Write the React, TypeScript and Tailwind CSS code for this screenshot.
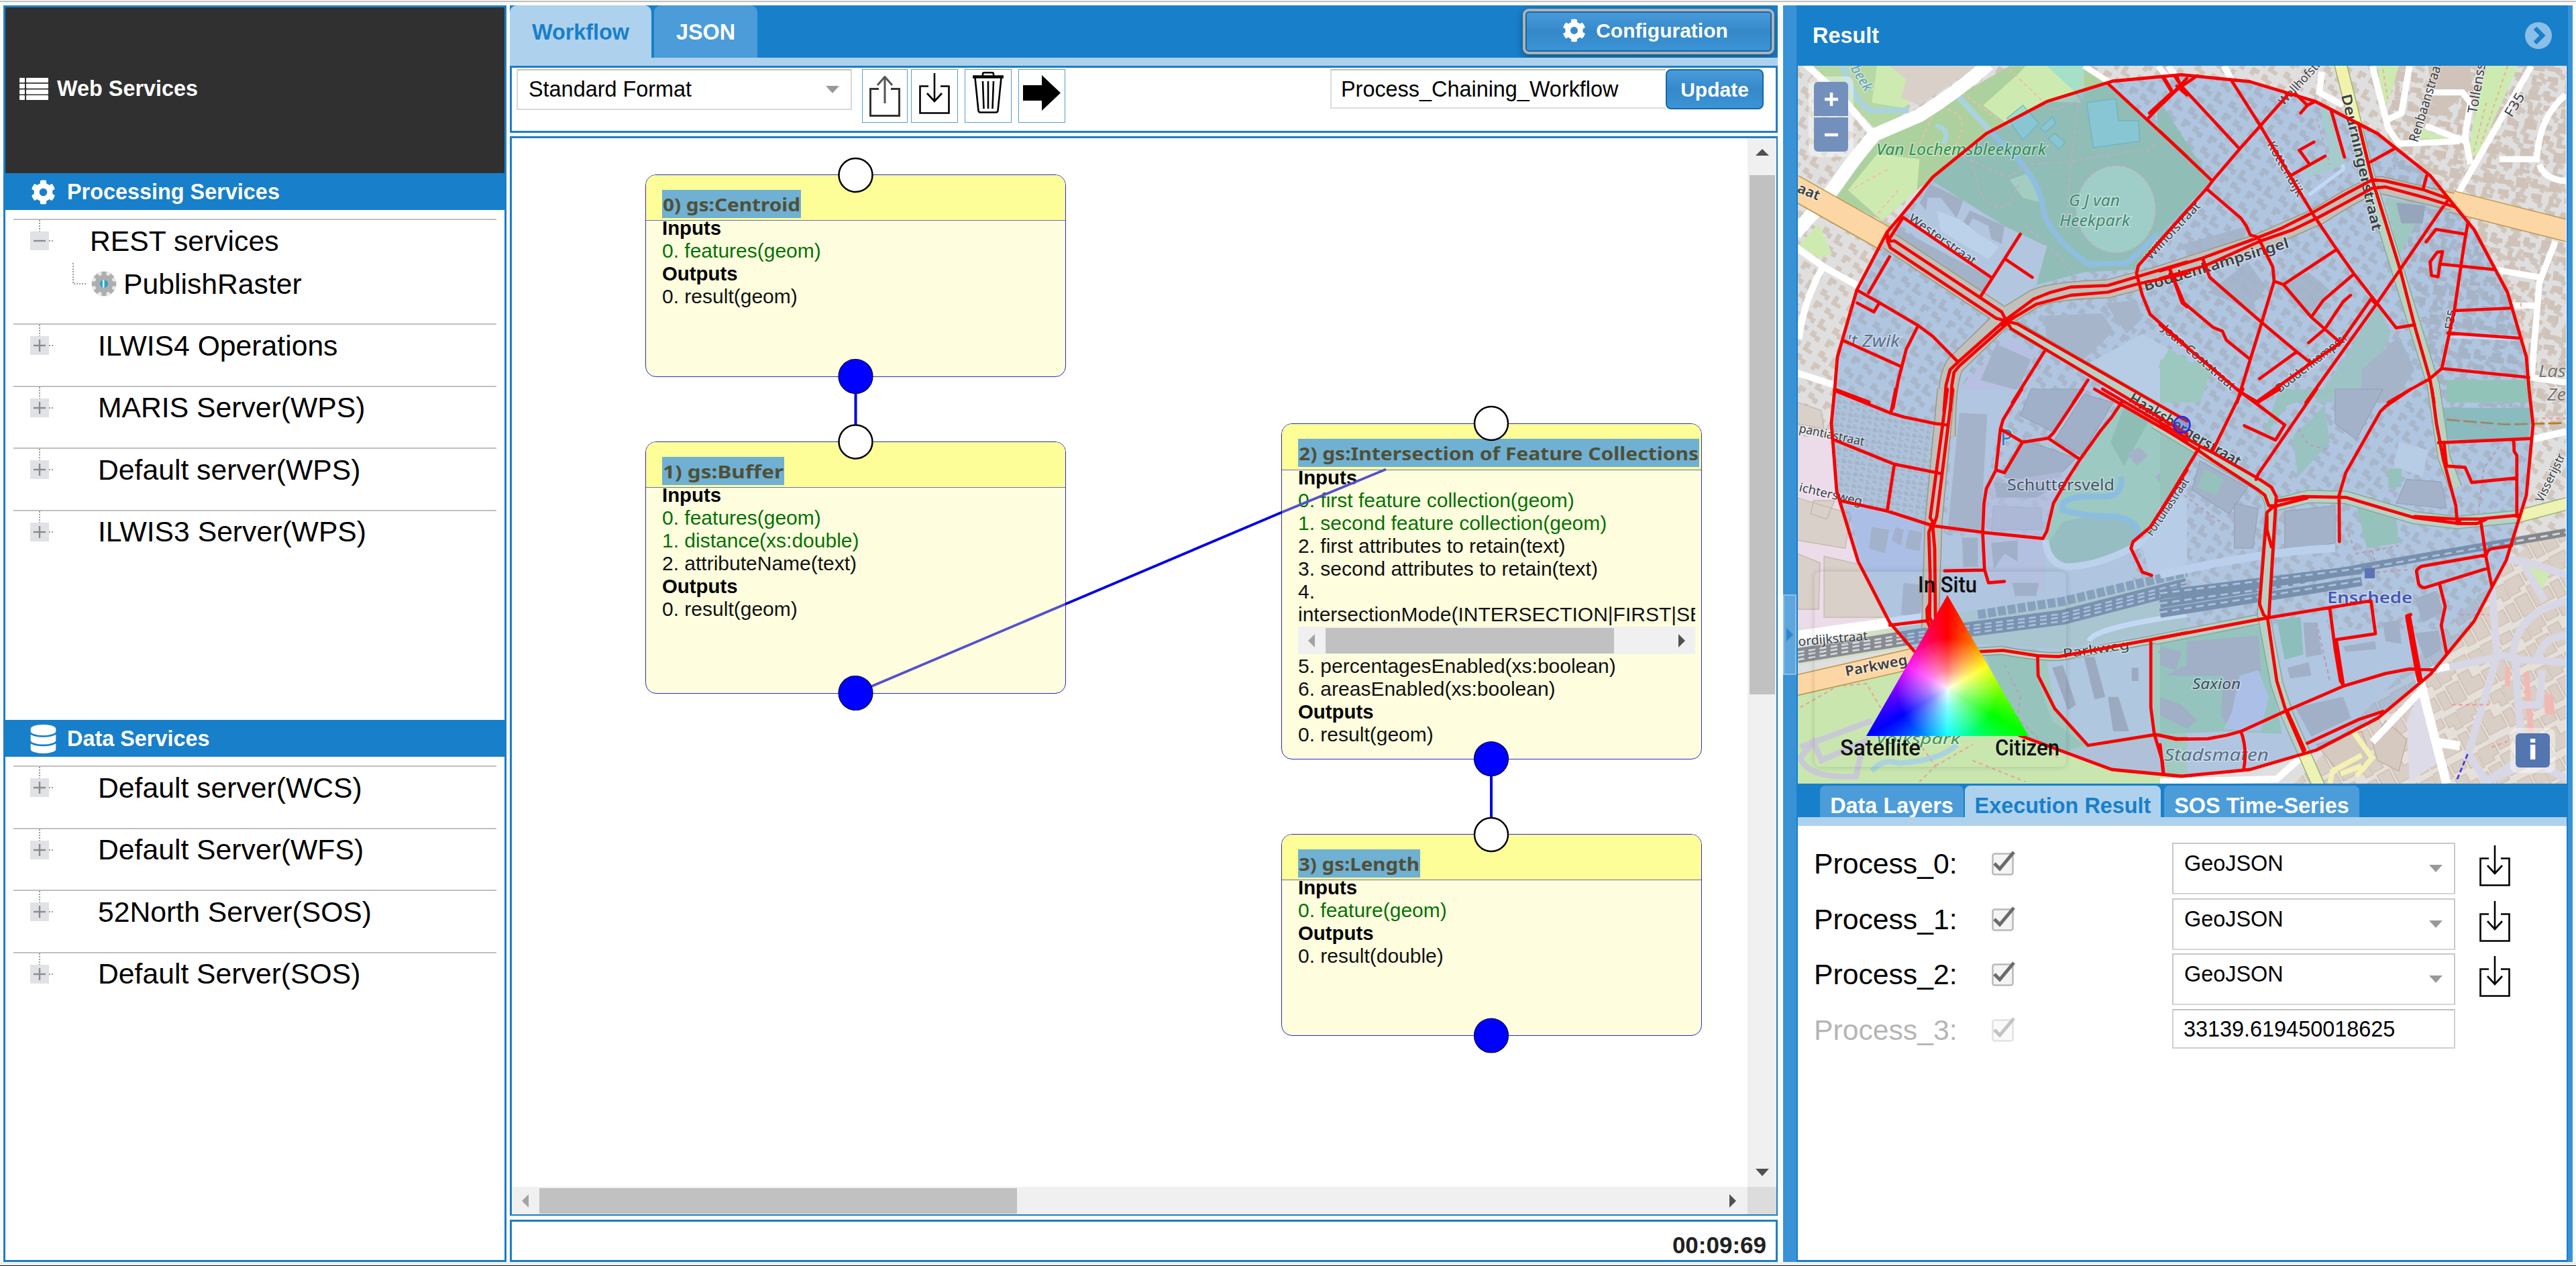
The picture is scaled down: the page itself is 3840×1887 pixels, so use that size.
import React from "react";
import { FaCog, FaDatabase } from "react-icons/fa";

/* ---------- small icons ---------- */

function ListIcon() {
  return (
    <svg width="43" height="33" viewBox="0 0 43 33" fill="#fff">
      {[0, 8.7, 17.4, 26].map((y) => (
        <g key={y}>
          <rect x="0" y={y} width="8" height="7" rx="1" />
          <rect x="10" y={y} width="33" height="7" rx="1" />
        </g>
      ))}
    </svg>
  );
}

function Expander({ open = false }: { open?: boolean }) {
  return (
    <svg className="ml-[25px] shrink-0" width="35" height="62" viewBox="0 0 35 62">
      <path d="M14 0V17" stroke="#999" strokeWidth="2" strokeDasharray="2 2" />
      <path d="M28 31H35" stroke="#999" strokeWidth="2" strokeDasharray="2 2" />
      <rect x="0" y="17" width="28" height="28" fill="#e0e2e5" />
      <path d="M5 31H23" stroke="#8c8c8c" strokeWidth="2.4" />
      {!open && <path d="M14 22V40" stroke="#8c8c8c" strokeWidth="2.4" />}
    </svg>
  );
}

function GearBadge() {
  return (
    <svg className="ml-[6px] shrink-0" width="38" height="40" viewBox="-19 -20 38 40">
      <circle r="19" fill="#e9e9e9" />
      <circle r="13.5" fill="#aeaeae" />
      {[0, 45, 90, 135, 180, 225, 270, 315].map((a) => (
        <rect key={a} x="-3.5" y="-18" width="7" height="8" fill="#aeaeae" transform={`rotate(${a})`} />
      ))}
      <circle r="6" fill="#25a3cc" />
      <rect x="-2" y="-5.5" width="2.5" height="11" fill="#fff" />
    </svg>
  );
}

function DownloadIcon() {
  return (
    <svg width="46" height="61" viewBox="0 0 46 61" fill="none" stroke="#000" strokeWidth="2.6">
      <path d="M14 19.5H1.5V59.5H44.5V19.5H32" />
      <path d="M23 0V41M12 30L23 42L34 30" />
    </svg>
  );
}

function UploadIcon() {
  return (
    <svg width="46" height="61" viewBox="0 0 46 61" fill="none">
      <path d="M14 19.5H1.5V59.5H44.5V19.5H32" stroke="#333" strokeWidth="3" />
      <path d="M23 41V2M12 14L23 1.5L34 14" stroke="#555" strokeWidth="3" />
    </svg>
  );
}

function TrashIcon() {
  return (
    <svg width="46" height="62" viewBox="0 0 46 62" fill="none" stroke="#000" strokeWidth="2.6" strokeLinejoin="round">
      <path d="M1 8.5V6.5H45V8.5ZM15 6V3Q15 1.3 17 1.3H29Q31 1.3 31 3V6" />
      <path d="M3.5 9L8.5 58Q9 60.5 11.5 60.5H34.5Q37 60.5 37.5 58L42.500 9" />
      <path d="M15 14L16.500 55M23 14V55M31 14L29.500 55" />
    </svg>
  );
}

function Caret({ dir, color }: { dir: "l" | "r" | "u" | "d"; color: string }) {
  const d = { l: "M10 0V20L0 10Z", r: "M0 0V20L10 10Z", u: "M0 10H20L10 0Z", d: "M0 0H20L10 11Z" }[dir];
  const tall = dir === "l" || dir === "r";
  return (
    <svg width={tall ? 10 : 20} height={tall ? 20 : 11} viewBox={tall ? "0 0 10 20" : "0 0 20 11"} className="shrink-0">
      <path d={d} fill={color} />
    </svg>
  );
}

/* ---------- left column ---------- */

function SectionBar({ icon, label }: { icon: React.ReactNode; label: string }) {
  return (
    <div className="flex h-[55px] shrink-0 items-center bg-[#187fca] pl-[38px] pt-[2px] text-[32.4px] font-bold text-white">
      <span className="flex w-[54px]">{icon}</span>
      {label}
    </div>
  );
}

function TreeRow({ label }: { label: string }) {
  return (
    <div className="h-[92.5px] border-t-2 border-[#c0c0c0]">
      <div className="flex h-[62px] items-center">
        <Expander />
        <span className="ml-[66px] text-[42.7px]">{label}</span>
      </div>
    </div>
  );
}

function LeftPanel() {
  return (
    <aside className="flex w-[750px] shrink-0 flex-col border-[3px] border-[#1d7ec6] bg-white">
      <div className="flex h-[247px] shrink-0 items-center gap-[13px] bg-[#303030] pb-[4px] pl-[21px] text-[32.4px] font-bold text-white">
        <ListIcon />
        Web Services
      </div>
      <SectionBar icon={<FaCog size={37} />} label="Processing Services" />
      <div className="h-[760px] shrink-0 px-3 pt-[13px]">
        <div className="h-[156px] border-t-2 border-[#c0c0c0]">
          <div className="flex h-[62px] items-center">
            <Expander open />
            <span className="ml-[54px] text-[42.7px]">REST services</span>
          </div>
          <div className="flex h-[66px] items-center">
            <svg className="ml-[88px] shrink-0" width="22" height="64" viewBox="0 0 22 64">
              <path d="M1 1V32H22" fill="none" stroke="#999" strokeWidth="2" strokeDasharray="2 2" />
            </svg>
            <GearBadge />
            <span className="ml-[10px] text-[42.7px]">PublishRaster</span>
          </div>
        </div>
        {["ILWIS4 Operations", "MARIS Server(WPS)", "Default server(WPS)", "ILWIS3 Server(WPS)"].map((t) => (
          <TreeRow key={t} label={t} />
        ))}
      </div>
      <SectionBar icon={<FaDatabase size={43} className="-ml-[3px]" />} label="Data Services" />
      <div className="px-3 pt-[13px]">
        {["Default server(WCS)", "Default Server(WFS)", "52North Server(SOS)", "Default Server(SOS)"].map((t) => (
          <TreeRow key={t} label={t} />
        ))}
      </div>
    </aside>
  );
}

/* ---------- workflow canvas ---------- */

const OX = 763;
const OY = 206;

type Line = { t: string; k?: "h" | "g" | "scroll" };
type NodeData = { x: number; y: number; h: number; head: number; title: string; tw: number; lines: Line[] };

const nodes: NodeData[] = [
  {
    x: 962, y: 260, h: 302, head: 68, title: "0) gs:Centroid", tw: 207,
    lines: [{ t: "Inputs", k: "h" }, { t: "0. features(geom)", k: "g" }, { t: "Outputs", k: "h" }, { t: "0. result(geom)" }],
  },
  {
    x: 962, y: 658, h: 376, head: 68, title: "1) gs:Buffer", tw: 182,
    lines: [
      { t: "Inputs", k: "h" }, { t: "0. features(geom)", k: "g" }, { t: "1. distance(xs:double)", k: "g" },
      { t: "2. attributeName(text)" }, { t: "Outputs", k: "h" }, { t: "0. result(geom)" },
    ],
  },
  {
    x: 1910, y: 631, h: 501, head: 69, title: "2) gs:Intersection of Feature Collections", tw: 598,
    lines: [
      { t: "Inputs", k: "h" }, { t: "0. first feature collection(geom)", k: "g" }, { t: "1. second feature collection(geom)", k: "g" },
      { t: "2. first attributes to retain(text)" }, { t: "3. second attributes to retain(text)" }, { t: "4." },
      { t: "intersectionMode(INTERSECTION|FIRST|SECOND)" }, { t: "", k: "scroll" },
      { t: "5. percentagesEnabled(xs:boolean)" }, { t: "6. areasEnabled(xs:boolean)" },
      { t: "Outputs", k: "h" }, { t: "0. result(geom)" },
    ],
  },
  {
    x: 1910, y: 1243, h: 301, head: 68, title: "3) gs:Length", tw: 182,
    lines: [{ t: "Inputs", k: "h" }, { t: "0. feature(geom)", k: "g" }, { t: "Outputs", k: "h" }, { t: "0. result(double)" }],
  },
];

function NodeCard({ n }: { n: NodeData }) {
  return (
    <div
      className="absolute w-[627px] overflow-hidden rounded-[16px] border-[1.5px] border-[#2a2ad0] bg-[#fefedf]"
      style={{ left: n.x - OX, top: n.y - OY, height: n.h }}
    >
      <div className="border-b-[1.5px] border-[#6b6bb8] bg-[#fefe98] pl-[24px] pt-[22px]" style={{ height: n.head }}>
        <div className="h-[42px] bg-[#70b0d2]" style={{ width: n.tw }}>
          <svg width={n.tw} height="42" className="block overflow-visible">
            <text
              x="1" y="32" fontSize="27" fontWeight="700" fill="#4f5038" textLength={n.tw - 2} lengthAdjust="spacingAndGlyphs"
              fontFamily='"Noto Sans", sans-serif'
            >
              {n.title}
            </text>
          </svg>
        </div>
      </div>
      <div className="-mt-[6px] ml-[24px] w-[592px] overflow-hidden text-[30px] leading-[34px]">
        {n.lines.map((l, i) =>
          l.k === "scroll" ? (
            <div key={i} className="my-px flex h-[41px] items-center bg-[#f0f0f0] px-[15px]">
              <Caret dir="l" color="#a3a3a3" />
              <div className="ml-[16px] h-[38px] w-[430px] bg-[#c1c1c1]" />
              <div className="grow" />
              <Caret dir="r" color="#505050" />
            </div>
          ) : (
            <div
              key={i}
              className={
                "h-[34px] whitespace-nowrap " +
                (l.k === "h" ? "text-[29.4px] font-bold text-black" : l.k === "g" ? "text-[#067106]" : "text-[#111]")
              }
            >
              {l.t}
            </div>
          )
        )}
      </div>
    </div>
  );
}

function Canvas() {
  return (
    <div className="relative h-[1563px] w-[1842px] overflow-hidden bg-white">
      {nodes.map((n) => (
        <NodeCard key={n.title} n={n} />
      ))}
      <svg className="absolute inset-0" width="1842" height="1563" viewBox="763 206 1842 1563">
        <path d="M1275.500 561V640M2223 1131V1220" stroke="#0000e6" strokeWidth="4" />
        <path d="M1275.500 1033L1588 900.500M1911 763.500L2066 699.500" stroke="#5450cf" strokeWidth="3.800" />
        <path d="M1588 900.500L1911 763.500" stroke="#0000e6" strokeWidth="3.800" />
        {[[1275.5, 261], [1275.5, 658.5], [2223, 631], [2223, 1244]].map(([x, y]) => (
          <circle key={x + "" + y} cx={x} cy={y} r="25" fill="#fff" stroke="#000" strokeWidth="2.500" />
        ))}
        {[[1275.5, 561], [1275.5, 1033], [2223, 1131], [2223, 1543.5]].map(([x, y]) => (
          <circle key={x + "" + y} cx={x} cy={y} r="25.500" fill="#00f" stroke="#000040" strokeWidth="1.200" />
        ))}
      </svg>
    </div>
  );
}

function ToolButton({ children, cls = "" }: { children: React.ReactNode; cls?: string }) {
  return <div className={"flex h-[80px] justify-center border border-[#5b9bd0] bg-white " + cls}>{children}</div>;
}

function CenterPanel() {
  return (
    <main className="ml-[5px] flex w-[1890px] shrink-0 flex-col">
      <div className="flex h-[78px] shrink-0 bg-[#187fca] text-[32.4px] font-bold">
        <div className="h-[90px] w-[211px] rounded-t-[10px] bg-[#aed2ed] pt-[21px] text-center leading-[38px] text-[#187fca]">Workflow</div>
        <div className="ml-[4px] h-[78px] w-[154px] rounded-t-[10px] bg-[#4b9cd9] pt-[21px] text-center leading-[38px] text-white">JSON</div>
        <div className="grow" />
        <div className="mr-[5px] mt-[5px] flex h-[68px] w-[375px] items-center justify-center gap-[15px] rounded-[9px] border-[4px] border-[#b0b0b0] bg-linear-to-b from-[#4a9bdb] via-[#3589c9] to-[#3b94d6] pb-[3px] pr-[10px] text-[30px] text-white shadow-[0_4px_12px_rgba(0,0,0,.35),inset_0_0_0_2px_#1468ab]">
          <FaCog size={35} />
          Configuration
        </div>
      </div>
      <div className="h-[12px] shrink-0 bg-[#aed2ed]" />
      <div className="flex h-[100px] shrink-0 border-[3px] border-[#1d7ec6] bg-white pl-[7px] pt-[2px]">
        <div className="flex h-[61px] w-[500px] shrink-0 items-center justify-between border-[2.5px] border-[#d8d8d8] border-t-[#c0c0c0] pl-[16px] pr-[17px] text-[32.4px]">
          Standard Format
          <Caret dir="d" color="#999" />
        </div>
        <ToolButton cls="ml-[15px] w-[68px] pt-[9px]"><UploadIcon /></ToolButton>
        <ToolButton cls="ml-[5px] w-[70px] pt-[5px]"><DownloadIcon /></ToolButton>
        <ToolButton cls="ml-[10px] w-[70px] pt-[3px]"><TrashIcon /></ToolButton>
        <ToolButton cls="ml-[10px] w-[70px] pt-[8px]">
          <svg width="56" height="53" viewBox="0 0 56 53"><path d="M0 15H28V0L56 26.500L28 53V38H0Z" fill="#000" /></svg>
        </ToolButton>
        <div className="ml-[395px] flex h-[59px] w-[500px] shrink-0 items-center border-[2.5px] border-r-0 border-[#ddd] border-t-[#c0c0c0] pt-px pl-[14px] text-[32.4px]">
          Process_Chaining_Workflow
        </div>
        <div className="flex h-[60px] w-[146px] shrink-0 items-center justify-center rounded-[8px] border-[2.5px] border-[#1468ab] bg-linear-to-b from-[#4a9bdb] via-[#3589c9] to-[#3b94d6] text-[30px] font-bold text-white">
          Update
        </div>
      </div>
      <div className="mt-[5px] flex h-[1609px] shrink-0 flex-col border-[3px] border-r-2 border-b-2 border-[#1d7ec6] bg-white">
        <div className="flex">
          <Canvas />
          <div className="flex h-[1563px] w-[43px] flex-col items-center bg-[#f0f0f0] pb-[16px] pt-[16px]">
            <Caret dir="u" color="#505050" />
            <div className="mt-[28px] h-[774px] w-[38px] bg-[#c1c1c1]" />
            <div className="grow" />
            <Caret dir="d" color="#505050" />
          </div>
        </div>
        <div className="flex h-[41px] bg-[#dcdcdc]">
          <div className="flex h-[41px] w-[1842px] items-center bg-[#f0f0f0] pl-[15px] pr-[17px]">
            <Caret dir="l" color="#a3a3a3" />
            <div className="ml-[16px] h-[38px] w-[712px] bg-[#c1c1c1]" />
            <div className="grow" />
            <Caret dir="r" color="#505050" />
          </div>
        </div>
      </div>
      <div className="mt-[6px] flex h-[63px] shrink-0 items-center justify-end border-[3px] border-[#1d7ec6] bg-white pr-[14px] pt-[14px] text-[35px] font-bold text-[#222]">
        00:09:69
      </div>
    </main>
  );
}

/* ---------- map ---------- */

const A = "translate(2640 0) scale(.3954 .3827)";
const B = "translate(3220 0) scale(.3954 .3827)";
const C = "translate(2640 580) scale(.3954)";
const D = "translate(3220 580) scale(.3954)";

const area =
  "M3251.6 111.400L3354 121.700L3451 151L3544 199L3623 262L3651 297L3688 342L3738 436L3766 532L3770 580L3776 633L3766 738L3736 835L3688 926L3623 1005L3545 1070L3453 1118L3354 1147L3252 1157L3148 1147L3010 1096L2853 970L2817 928L2770 837L2738 732L2730 631L2735 580L2739 532L2768 432L2813 346L2836 319L2881 264L2961 199L3052 151L3149 121Z";

const redA = `M1270 325L1568 610M1480 298L1515 360L1418 465M1530 298L1545 335L1515 360M1530 335L1568 370M1480 400L1568 305
M500 848L830 1080M940 912L790 1155M885 1010L985 1080M497 848L440 940
M440 940L465 938L870 1215L885 1245M440 940L450 965L850 1240L930 1262L1568 1640
M885 1245L905 1280L1568 1690M885 1245L990 1165L1050 1140L1130 1118L1270 1112L1568 1020M870 1265L1000 1185L1130 1150L1270 1138L1385 1105L1568 1065
M885 1245L700 1415L675 1440L660 1500L652 1600M885 1265L710 1425L690 1450L682 1500L676 1600
M447 1000L368 1140M325 1130L410 1180L555 1268L610 1310L705 1410M325 1180L388 1215L408 1180M555 1268L510 1360L480 1480L460 1590
M270 1325L485 1425M240 1515L370 1566M1030 1370L910 1568M1195 1480L1140 1568
M1568 820L1385 1035L1378 1065L1400 1150L1430 1225L1568 1350M1503 1045L1550 1180L1568 1195M438 905L440 940`;

const redB = `M10 300L45 360L-40 440M55 296L80 335L300 580M0 412L68 345L140 295M0 512L197 705M-10 950L175 735L197 705L300 580L378 490L485 365
M270 315L378 490L490 685L580 840L665 970L730 1065L890 1277L960 1265M490 685L622 608M560 635L525 585L580 553
M510 365L555 410L530 440M585 395L555 410M645 430L695 612M748 480L800 700L905 1050L960 1270L1017 1475L1033 1568
M795 630L885 578M1005 685L992 735
M0 1055L160 1005L370 925L460 888L575 828L700 755L800 700L850 705L990 738L1090 775M0 1085L170 1035L375 940L500 895L600 845L700 790L800 733L850 728L1000 770L1110 805
M1085 780L1060 815L905 1050L815 1185L550 1568M175 735L305 850L325 880L340 915L370 925L425 1040L430 1095L382 1260L340 1400L290 1568
M430 1095L465 1108L665 972M465 1108L570 1235L680 1335L795 1165L815 1185M570 1235L615 1170L730 1068M718 1150L690 1175L622 1280L560 1335
M680 1335L575 1410L360 1568M160 1005L187 1080L382 1255L515 1370L570 1415M515 1370L375 1475
M37 1050L90 1180L200 1275L235 1290L250 1325L340 1400M0 1265L300 1525L370 1568
M1160 870L1145 960L1110 1205L1062 1435L1017 1475L930 1525L860 1568M1003 942L1040 893L1150 912M1055 1028L1260 1050M1065 980L1045 982L1018 1020L1023 1073L1048 1078L1055 1028Z
M1110 1210L1325 1200M1085 1297L1355 1317M1062 1435L1390 1470`;

const redC = `M240 5L450 90L500 105L620 130L665 135M470 0L452 90M665 0L600 485L610 500L595 540L600 700L598 860L615 900M685 0L625 480L610 520L617 600L620 860
M235 190L465 283L640 318M465 283L438 460M260 420L440 460L610 515L800 540L1025 563L1040 535L1065 430L1120 335L1165 265L1240 160L1285 105L1325 45
M945 0L875 115L865 150L848 305L812 375L803 430L798 540L805 680L820 730L880 725M865 150L948 200L1045 185L1165 265M948 200L880 315L848 305M1045 185L1065 165L1175 0
M655 685L805 682M598 810L588 830L590 875L600 900M448 890L590 873M1220 0L1568 200M1250 0L1568 185
M1568 305L1430 520L1365 575L1357 600L1400 690L1435 702
M780 990L875 985L1005 1005L1085 1008L1430 945L1568 918M1005 1005L1007 1080L1070 1205L1195 1343L1450 1302L1530 1318L1568 1318
M1432 945L1432 1200L1445 1300L1475 1400L1480 1450`;

const redD = `M-10 120L150 215L200 240L375 340L420 370L438 405L435 450L410 860M0 140L140 228L200 270L370 380L395 400L410 440L430 440L403 465L395 560L375 810L390 850L405 865
M145 225L0 465M197 235L312 0M290 0L470 135L435 192L318 138M365 52L450 0M590 0L370 320L362 340M403 530L420 595M403 480L403 540
M440 422L540 405L700 408L960 485L1115 505L1130 495M440 440L555 410M960 480L1120 490L1200 490L1350 475M1120 507L1195 507L1230 490
M945 0L850 65L830 85L700 315L675 400L676 575M1025 0L1042 130L1068 265L1115 440L1120 500M1050 202L1400 186M1080 290L1150 295L1175 352L1345 335M1333 190L1335 235L1345 250L1345 480M1070 200L1080 290
M1210 505L1230 640L1250 740M1230 625L985 668Q965 680 967 690L975 735Q985 750 1000 748L1235 675M1230 625Q1235 605 1250 602L1325 590M1055 740L1075 820L1060 890L1080 995
M0 938L405 862L795 798L812 922L660 945M640 828L660 980L680 1100L690 1115M665 950L690 1110
M405 862L440 1100L475 1215L540 1365M480 1215L545 1360M0 1305L60 1320L180 1318L250 1305L305 1290L470 1215L610 1155L690 1120L850 1072L940 1055L1035 1058
M305 1290Q330 1360 315 1435M0 1340L12 1450M940 855L985 1100M930 860L968 1070L975 1100M930 855L945 850
M555 1335L750 1245L840 1215`;

function MapLabel(p: { x: number; y: number; s?: number; r?: number; w: number; c?: string; i?: boolean; b?: boolean; t: string }) {
  return (
    <text
      x={p.x} y={p.y} fontSize={p.s ?? 22} fill={p.c ?? "#3a4048"} textLength={p.w} lengthAdjust="spacingAndGlyphs"
      fontFamily='"Noto Sans", sans-serif' fontStyle={p.i ? "italic" : undefined} fontWeight={p.b ? 600 : 400}
      stroke="#ffffff" strokeOpacity=".4" strokeWidth="3" paintOrder="stroke"
      transform={p.r ? `rotate(${p.r} ${p.x} ${p.y})` : undefined}
    >
      {p.t}
    </text>
  );
}

function Road({ d, w, c, k, t }: { d: string; w: number; c: string; k: string; t: string }) {
  return (
    <g transform={t} fill="none" strokeLinejoin="round">
      <path d={d} stroke={k} strokeWidth={w + 8} />
      <path d={d} stroke={c} strokeWidth={w} />
    </g>
  );
}

function CityMap() {
  return (
    <svg className="block" width="1145" height="1070" viewBox="2680 98 1145 1070">
      <defs>
        <pattern id="bA" width="46" height="40" patternUnits="userSpaceOnUse" patternTransform="rotate(32)">
          <path d="M2 4h9v5h7v8h-6v-3h-10zM24 3h7v9h8v6h-15zM3 24h12v7h-5v5h-7zM22 25h8v4h9v8h-7v-3h-10z" fill="#d1c6bd" />
        </pattern>
        <pattern id="bB" width="50" height="44" patternUnits="userSpaceOnUse" patternTransform="rotate(8)">
          <path d="M2 3h14v6h5v9h-19zM26 2h8v7h10v7h-18zM4 25h7v9h9v6h-16zM27 24h16v12h-6v-4h-10z" fill="#cfc2b8" />
        </pattern>
        <pattern id="bC" width="76" height="68" patternUnits="userSpaceOnUse" patternTransform="rotate(-28)">
          <path d="M0 2h26v18h-10v6h-16zM30 2h20v14h-20zM54 4h20v24h-12v-8h-8zM2 32h20v30h-20zM26 24h18v14h12v20h-30zM60 36h14v26h-14z" fill="#dacfc6" stroke="#c6b5a6" strokeWidth="1.200" />
        </pattern>
      </defs>
      <rect x="2680" y="98" width="1145" height="1070" fill="#e0dfdf" />
      <rect x="2680" y="98" width="700" height="700" fill="url(#bA)" />
      <rect x="3180" y="98" width="645" height="840" fill="url(#bA)" />
      <path d="M3540 98H3825V640H3640Z" fill="url(#bB)" />
      <path d="M3420 1168L3780 800H3825V1168Z" fill="#e6e0da" />
      <path d="M3420 1168L3780 800H3825V1168Z" fill="url(#bC)" />

      {/* parks and land use, north-west */}
      <g transform={A}>
        <path d="M640 400L760 340L900 257H1180L1420 460L1568 600V800L1380 1050L1180 1060L1000 1110L1040 960L880 880L600 700L550 740L420 860L245 770L390 560Z" fill="#add19e" />
        <path d="M160 257H440L520 430L400 510L300 400Z" fill="#b5d8a5" />
        <path d="M400 257H700L500 420L380 400Z" fill="#cdebb0" />
        <path d="M450 257H780L560 410L490 380L510 310Z" fill="#d9d0c9" />
        <path d="M100 960L180 870L230 990L180 1005Z" fill="#cdebb0" />
        <path d="M800 410L930 290L960 257H1080L1170 400L1040 395L900 490ZM290 740L400 600L560 620L550 740L420 860ZM900 700L980 670L1020 790L950 770Z" fill="#cdebb0" />
        <path d="M1040 257H1180V390Z" fill="#a5e0c8" />
        <ellipse cx="1300" cy="815" rx="150" ry="170" fill="#c5ecb8" stroke="#f4b4a8" strokeWidth="5" strokeDasharray="12 10" />
        <path d="M1190 400L1300 385L1310 470L1385 470L1390 550L1215 575ZM950 410L1010 480L950 545L890 460ZM1060 455L1075 480L1035 515L1015 500ZM1070 520L1110 555L1085 580L1045 540Z" fill="#9fe0cc" stroke="#7cc4b0" strokeWidth="4" />
        <path d="M270 257Q330 440 400 430L520 430M700 370Q800 480 880 570Q1010 680 1030 830Q1060 930 1200 1030L1340 1025Q1420 960 1568 790" fill="none" stroke="#aad3df" strokeWidth="22" />
        <path d="M620 490Q680 500 650 560" fill="none" stroke="#aad3df" strokeWidth="18" />
        <path d="M620 430L560 560M640 420Q760 440 700 560M700 600L890 690L980 640L1120 630L1420 580M1130 640L1110 900M1170 300L1130 640M900 270L1060 430L1180 380M720 360L900 500M480 740L380 860M440 660L300 740M760 620Q790 860 900 790L940 700M960 880L1140 1050M1470 620L1500 850M1420 590L1520 480" fill="none" stroke="#f6b9ac" strokeWidth="5" strokeDasharray="14 12" />
        <path d="M600 710L890 890L1040 960L1000 1110L880 1200L500 880Z" fill="#e4e2df" />
        <path d="M600 715L725 780L700 850L640 770L590 770L585 820L560 790ZM750 820L880 880L870 950L830 930L820 880L760 850L720 930L705 900Z" fill="#c9bdb6" />
        <path d="M625 820L720 860L780 910L860 960L820 1010L640 900Z" fill="#f3f2f0" />
        <path d="M480 890L825 1080L800 1135L470 950Z" fill="#cbc0b8" />
        <path d="M1030 1230L1250 1220L1290 1290L1180 1400L1040 1330ZM1260 1180L1380 1170L1400 1240L1340 1300Z" fill="#d0c5bc" />
        <path d="M1190 1420L1400 1300L1568 1400V1568H1300Z" fill="#eceae8" />
        <path d="M900 1320L1000 1370L900 1568H730L720 1500Z" fill="#ecd7e4" />
        <path d="M850 1340L980 1400L930 1520L790 1480Z" fill="#cabfba" />
        <path d="M1500 1360L1568 1400V1490L1460 1430Z" fill="#bde5a8" />
      </g>
      <g transform={A} fill="none" stroke="#fff" strokeWidth="40" strokeLinejoin="round">
        <path d="M820 250Q700 360 560 450L390 525L300 640L210 770L90 910" strokeWidth="52" />
        <path d="M130 250L260 370L390 530" strokeWidth="26" />
        <path d="M90 960L200 1040L340 1120M195 1040Q120 1180 105 1320M90 1450L240 1500" strokeWidth="26" />
        <path d="M1180 257L1290 330M1460 257L1500 310" strokeWidth="22" />
      </g>

      {/* north-east */}
      <g transform={B}>
        <path d="M-10 380L190 700L160 740L-10 920Z" fill="#add19e" />
        <path d="M600 410L650 440L700 640L560 690L540 650L640 600Z" fill="#cfe8c0" />
        <path d="M820 257H900L860 400H840ZM1230 257H1350L1200 600L1160 620L1180 480ZM1050 310L1120 340L1030 350ZM980 500L1090 540H980Z" fill="#cdebb0" />
        <path d="M850 770L1000 800L900 1000ZM0 1400L200 1420L150 1568H0Z" fill="#bfe3ab" />
        <path d="M890 790L1000 800L990 870H910Z" fill="#b5aba5" />
        <path d="M710 1370L820 1180L870 1300L760 1568H580Z" fill="#c3dcb8" />
        <path d="M760 1440L900 1310L960 1440L880 1568H760ZM1010 257H1170V350L1040 460Z" fill="#cfc3ba" />
        <path d="M1080 1480H1400V1568H1080Z" fill="#b0dca0" />
        <path d="M180 1140L330 1020L400 1120L340 1200ZM440 1110L560 1060L640 1130L560 1230ZM90 950L330 880L300 1000L110 1040Z" fill="#cabfb7" opacity=".8" />
        <g fill="none" stroke="#fff" strokeWidth="24">
          <path d="M940 257L910 440L850 470M800 257L860 500L900 560L1130 550M1010 360H1140L1170 400L1150 530L1170 640M1000 490L1150 550M1400 257L1120 760M1280 620L1420 620Q1430 450 1530 370M1430 640Q1450 700 1530 705M1490 940L1430 1100L1400 1470L1530 1490M1260 1050L1430 1080M1320 1190H1420" />
          <path d="M690 640L690 660L560 760M1080 1310L1340 1320" strokeWidth="14" />
          <path d="M610 280L600 360L690 410M240 257L270 310M30 257L55 290" />
        </g>
        <path d="M590 460L640 640M1230 400L1180 600M1310 257L1210 560M840 270L860 400M1140 1110H1360M1440 1110M1360 1180L1370 1320" fill="none" stroke="#f3a9a0" strokeWidth="5" strokeDasharray="14 12" />
      </g>

      {/* south-west */}
      <g transform={C}>
        <path d="M100 180H230L250 420L330 650L448 880L100 900Z" fill="#ecdcea" />
        <path d="M100 50L190 80L200 150L100 130ZM100 410L300 470L280 600L100 570ZM100 620L185 655L180 830H100ZM200 630L330 660L430 860L200 860ZM160 420L240 420L210 490L150 470Z" fill="#d9d0c9" stroke="#c3b3a6" strokeWidth="3" />
        <path d="M240 10L620 130L610 500L260 420L235 190Z" fill="#dcd9d8" />
        <path d="M240 10L620 130L610 500L260 420L235 190Z" fill="url(#bB)" />
        <path d="M690 0H940L860 150L810 370L800 540H660Z" fill="#e2e0e0" />
        <path d="M710 90L815 95L790 540H665Z" fill="#cdc2bb" />
        <path d="M290 430L600 515L570 690H350Z" fill="#d8d4ea" />
        <path d="M380 520L445 530L430 620L370 600ZM470 520L500 530L490 590L455 570ZM520 530L570 540L560 610L505 600ZM500 730L580 740L560 860L490 850Z" fill="#c9bfbc" />
        <path d="M980 0L1180 0L1060 160L940 100ZM1180 20L1290 50L1170 250L1070 190ZM950 190L1150 260L1040 370L880 330ZM840 440L1020 450L1020 530H830Z" fill="#c8bcba" stroke="#b0a29c" strokeWidth="3" />
        <path d="M800 360L1110 310L1030 560L1035 760L830 740L800 560Z" fill="#ead2e0" opacity=".6" />
        <path d="M830 580L930 570L930 650L880 620L840 680ZM840 350L1060 370L1000 410H850ZM910 730L1010 730L1000 780L920 780ZM720 560H780V670H725Z" fill="#c8bcba" />
        <path d="M1320 60L1568 200L1430 520L1340 620Q1060 720 1040 560L1080 420L1200 230Z" fill="#bfe5ae" />
        <path d="M1330 70L1430 110L1330 290L1280 200Z" fill="#a9d29a" />
        <path d="M1100 500Q1250 460 1380 500L1380 590Q1060 740 1045 580Z" fill="#b4d2b0" />
        <path d="M1320 330Q1330 410 1240 405Q1080 400 1100 455Q1180 480 1300 480Q1400 500 1380 560" fill="none" stroke="#a4d2e0" strokeWidth="22" />
        <path d="M1035 570Q1040 650 1110 670Q1250 670 1430 560L1568 500" fill="none" stroke="#f2f2f4" strokeWidth="26" />
        <path d="M1340 240L1390 220L1420 250L1380 290ZM1450 330L1500 290L1530 310L1480 370Z" fill="#ccc1bb" />
        <path d="M1400 590L1568 380V680L1430 720Z" fill="#eceaea" />
        <path d="M100 1120L560 1030L880 1010L1430 950L1568 920V1487H100Z" fill="#c8e6ae" />
        <path d="M340 920L600 860L1120 780L1568 680V900L1090 980L780 960L560 970L100 1040V1000Z" fill="#d5dfc5" />
        <path d="M100 1005L560 930L1100 860L1568 740" fill="none" stroke="#888c92" strokeWidth="56" />
        <path d="M100 992L560 917L1100 847L1568 727M100 1005L560 930L1100 860L1568 740M100 1020L560 945L1100 875L1568 755" fill="none" stroke="#d4d7da" strokeWidth="7" strokeDasharray="26 16" />
        <path d="M780 850L1100 800L1568 690" fill="none" stroke="#9ea3a8" strokeWidth="34" strokeDasharray="30 8" />
        <path d="M1200 950Q1210 900 1568 850" fill="none" stroke="#fff" strokeWidth="20" />
        <path d="M100 930L600 860" fill="none" stroke="#fff" strokeWidth="40" />
        <path d="M1040 1030L1230 1000L1440 960L1440 1300L1200 1340L1070 1200Z" fill="#dfe3e0" />
        <path d="M1060 1050L1100 1040L1150 1190L1120 1210ZM1180 1010L1220 1010L1260 1160L1220 1170ZM1270 1160L1310 1160L1350 1290L1290 1290ZM1360 1050H1385V1100H1360ZM1460 990L1540 980L1510 1050ZM1470 1150L1550 1180L1480 1220Z" fill="#c0b2ac" />
        <path d="M1080 1370L1480 1310V1450L1300 1440Z" fill="#e2d6d4" />
        <path d="M800 980H1000V1080L1060 1250L1180 1340L1100 1370L930 1300Z" fill="#b6dba4" />
        <path d="M110 1350L380 1250M110 1390Q140 1470 320 1460L350 1330L190 1400L160 1330Z" fill="none" stroke="#c9c9d6" strokeWidth="22" />
        <path d="M380 1440Q420 1390 480 1410Q640 1400 700 1340" fill="none" stroke="#aad3df" strokeWidth="20" />
        <path d="M110 1200L250 1120L360 1110L430 1230M540 1310L620 1420L560 1480M620 1420L760 1340M880 1040L940 1160L930 1240L1080 1390M760 1400L960 1480" fill="none" stroke="#ef9f98" strokeWidth="5" strokeDasharray="14 12" />
      </g>

      {/* south-east */}
      <g transform={D}>
        <path d="M1050 70H1400L1390 190L1060 190Z" fill="#a2cfa8" />
        <path d="M480 60L700 0H450L380 200ZM500 180L620 60L640 200L520 330Z" fill="#bbdcad" />
        <path d="M0 130L140 230L20 440L0 440Z" fill="#b9dba6" />
        <path d="M150 270L330 370L260 470L120 380ZM470 460L660 440L660 580L470 620ZM660 0L840 0L740 190L660 130ZM930 340L1060 350L1080 450L890 430ZM280 430L370 450L350 600L280 600Z" fill="#cbbfba" stroke="#b3a59e" strokeWidth="3" />
        <path d="M170 300L240 340L210 400L140 370ZM740 440L890 480L900 580L780 600ZM860 300H910V370H860Z" fill="#b4dca5" />
        <path d="M900 200L1010 230L990 330L880 290Z" fill="#eceae8" />
        <path d="M0 700Q400 610 660 600" fill="none" stroke="#f0f1f4" strokeWidth="30" />
        <path d="M0 810L400 745L780 670L1240 590L1530 540" fill="none" stroke="#84888e" strokeWidth="30" />
        <path d="M0 775L760 680M0 845L760 725" fill="none" stroke="#84888e" strokeWidth="34" />
        <path d="M0 770L760 675M0 808L760 702M0 842L760 722M800 670L1530 540" fill="none" stroke="#d6d9dd" strokeWidth="7" strokeDasharray="28 18" />
        <path d="M0 950L380 890L460 1300L250 1290L0 1300Z" fill="#b4dba8" />
        <path d="M100 950L370 930L380 1060L360 1160L300 1200L250 1260L230 1230L240 1080L20 1080L100 1040ZM0 970L80 990L60 1060L0 1040ZM0 1160L80 1190L140 1250L100 1280L0 1230Z" fill="#c7bab8" />
        <path d="M300 1080L370 1060L410 1160L380 1290L240 1280L270 1220Z" fill="#d9d6ec" />
        <path d="M440 880L620 840L660 1000L700 1110L480 1200Z" fill="#e0e0e2" />
        <path d="M440 870L530 860L540 1000L470 1020Z" fill="#a5d3a5" />
        <path d="M540 880L590 880L610 1000L550 1010ZM480 1050L560 1030L570 1080L490 1090ZM690 970L810 950L815 980L700 990ZM840 880L900 870L910 960L850 950ZM510 1200L690 1160L720 1240L570 1310ZM960 920L1050 910L1060 980L1000 1020ZM960 790L1040 760L1070 840L990 880Z" fill="#c8bbb8" />
        <path d="M590 1340L760 1290L800 1400L680 1450ZM850 1250L930 1320L900 1440L820 1400L800 1330Z" fill="#d6c9c0" stroke="#bbaa9c" strokeWidth="3" />
        <path d="M930 1250L1000 1100L1060 1400L940 1480Z" fill="#dddbe8" />
        <path d="M640 1487L650 1440L760 1380M720 1280L800 1390L740 1460M680 1450L760 1420" fill="none" stroke="#f3f2b4" strokeWidth="20" />
        <path d="M1370 1070L1390 1060L1410 1300L1430 1330H1390ZM1450 1150L1480 1150L1490 1230L1450 1220ZM1300 1050H1320V1120H1300Z" fill="#f2b8b4" />
        <path d="M1360 670Q1420 650 1470 690L1440 760Z" fill="#cdebb0" />
        <g fill="none" stroke="#d8d7e6" strokeWidth="28">
          <path d="M1250 740L1270 1000L1360 1020L1530 1030M1270 1010L1160 1380M1330 1010Q1340 840 1530 800M1420 1030Q1440 930 1530 930M1340 1020L1350 1190L1430 1190L1440 1060M1350 1190L1360 1290M1040 1060L1270 1010M1270 640L1380 650L1530 700M1370 660L1450 800M1160 1370L1230 1480L1340 1430M1230 1480L1380 1380L1530 1470" />
        </g>
        <g fill="none" stroke="#fff">
          <path d="M975 1080L1080 1487M1035 1330L1130 1345" strokeWidth="34" />
          <path d="M1400 190L1530 160" strokeWidth="26" />
          <path d="M540 1380L440 1470L0 1480M800 1330L1000 1120M1020 1060L1090 1045" strokeWidth="26" />
        </g>
        <path d="M1120 1470L1160 1375" stroke="#3c3ce0" strokeWidth="7" strokeDasharray="18 10" />
        <path d="M520 150L560 210L640 230M700 520L740 620L900 590M800 610L820 690L940 680M590 880L640 1100M1200 470L1220 300L1290 200M90 400L240 510M1250 1350L1330 1320M1100 1190H1240M1080 100L1280 160M1130 850H1240M1440 110H1530" fill="none" stroke="#ee9d9b" strokeWidth="6" strokeDasharray="14 12" />
        <path d="M1080 115L1300 133L1520 128" fill="none" stroke="#b27f1f" strokeWidth="7" strokeDasharray="50 14" />
      </g>

      {/* main roads */}
      <Road t={A} w={90} c="#fcd6a4" k="#b9994e" d="M80 725L440 935" />
      <Road t={A} w={66} c="#fcd6a4" k="#b9994e" d="M440 935L880 1235L990 1165Q1060 1130 1270 1125L1600 1035M880 1235L700 1415Q660 1450 660 1700" />
      <Road t={B} w={62} c="#fcd6a4" k="#b9994e" d="M-20 1075L370 945L600 840Q780 720 830 720L1100 785L1560 905" />
      <Road t={B} w={80} c="#fcd6a4" k="#b9994e" d="M1100 785L1560 905" />
      <Road t={C} w={60} c="#fcd6a4" k="#b9994e" d="M660 0L612 510L600 900" />
      <Road t={C} w={72} c="#fcd6a4" k="#b9994e" d="M80 1120L560 1010" />
      <Road t={C} w={26} c="#f2f3b4" k="#95ab68" d="M560 1005L870 985Q1000 1010 1090 1008L1600 915" />
      <Road t={D} w={32} c="#eef2b4" k="#9db474" d="M-20 945L400 862" />
      <Road t={A} w={40} c="#eef2b4" k="#9db474" d="M900 1260L1568 1660" />
      <Road t={D} w={42} c="#eef2b4" k="#9db474" d="M-20 125L190 250L370 360Q420 400 420 450L390 850L440 1110L480 1230L600 1500M420 440L560 405L700 408L960 485L1120 503L1350 480L1560 425" />
      <Road t={B} w={42} c="#f1f3ac" k="#9db474" d="M680 250L790 700L1030 1500L1070 1780L1115 1900" />

      <path d={area} fill="#659ee0" fillOpacity=".39" />

      {/* labels */}
      <MapLabel x={2797} y={231} s={24} w={253} i c="#2f9050" t="Van Lochemsbleekpark" />
      <MapLabel x={3084} y={307} s={24} w={76} i c="#3f8a6e" t="G J van" />
      <MapLabel x={3070} y={337} s={24} w={105} i c="#3f8a6e" t="Heekpark" />
      <MapLabel x={2758} y={102} s={21} r={58} w={42} i c="#5f9fc4" t="beek" />
      <MapLabel x={2678} y={286} s={21} r={22} w={34} b t="aat" />
      <MapLabel x={2844} y={328} s={18} r={35} w={118} t="Westerstraat" />
      <MapLabel x={2753} y={517} s={25} w={79} i c="#5c708e" t="'t Zwik" />
      <MapLabel x={3198} y={434} s={21} r={-17} w={225} b t="Boddenkampsingel" />
      <MapLabel x={3206} y={388} s={17} r={-47} w={110} t="Wilhofstraat" />
      <MapLabel x={3404} y={158} s={18} r={-47} w={84} t="Wellhofstr" />
      <MapLabel x={3379} y={215} s={18} r={60} w={92} t="Kottendijk" />
      <MapLabel x={3490} y={142} s={21} r={77} w={208} b t="Deurningerstraat" />
      <MapLabel x={3604} y={213} s={20} r={-73} w={124} t="Renbaanstraat" />
      <MapLabel x={3692} y={170} s={20} r={-80} w={76} t="Tollenss" />
      <MapLabel x={3744} y={176} s={20} r={-58} w={38} t="F35" />
      <MapLabel x={3656} y={492} s={17} r={-80} w={30} t="F35" />
      <MapLabel x={3222} y={492} s={18} r={41} w={138} t="Joan Coststraat" />
      <MapLabel x={3398} y={586} s={18} r={-38} w={132} t="Boddenkampstr" />
      <MapLabel x={3784} y={562} s={25} w={41} i c="#777" t="Las" />
      <MapLabel x={3797} y={597} s={25} w={28} i c="#777" t="Ze" />
      <MapLabel x={2681} y={644} s={18} r={12} w={99} t="pantiastraat" />
      <MapLabel x={2681} y={732} s={18} r={13} w={96} t="ichtersweg" />
      <MapLabel x={2992} y={731} s={23} w={160} c="#46546c" t="Schuttersveld" />
      <MapLabel x={2982} y={664} s={32} w={18} c="#1f7fc8" t="P" />
      <MapLabel x={3172} y={598} s={22} r={31} w={190} b t="Haaksbergerstraat" />
      <MapLabel x={3208} y={800} s={18} r={-56} w={100} t="Fortunastraat" />
      <MapLabel x={2681} y={963} s={19} r={-5} w={104} t="ordijkstraat" />
      <MapLabel x={2752} y={1008} s={21} r={-11} w={94} b t="Parkweg" />
      <MapLabel x={3076} y={981} s={19} r={-8} w={100} t="Parkweg" />
      <MapLabel x={2796} y={1109} s={22} w={126} i c="#39955a" t="Volkspark" />
      <MapLabel x={3268} y={1027} s={22} w={72} i c="#3d5060" t="Saxion" />
      <MapLabel x={3226} y={1134} s={25} w={156} i c="#5a708c" t="Stadsmaten" />
      <MapLabel x={3469} y={899} s={23} w={127} b c="#4458b8" t="Enschede" />
      <MapLabel x={3790} y={750} s={18} r={-64} w={78} t="Visserijstr" />
      <rect x="3525" y="847" width="15" height="15" fill="#5a72b8" />

      {/* computed road network */}
      <g fill="none" stroke="#f60000" strokeWidth="12" strokeLinejoin="round" strokeLinecap="round">
        <path transform={A} d={redA} />
        <path transform={B} d={redB} />
        <path transform={C} d={redC} />
        <path transform={D} d={redD} />
      </g>
      <path d={area} fill="none" stroke="#f60000" strokeWidth="4.800" strokeLinejoin="round" />
      <circle cx="3252.500" cy="633" r="12" fill="#3c50dc" fillOpacity=".4" stroke="#2828dc" strokeWidth="2.500" />
    </svg>
  );
}

function TriangleLegend() {
  return (
    <div className="absolute left-[25px] top-[754px] h-[291px] w-[375px] rounded-[8px] shadow-[0_0_8px_rgba(0,0,0,.16)]">
      <div
        className="absolute left-[77px] top-[35px] h-[210px] w-[242px]"
        style={{
          clipPath: "polygon(50% 0, 100% 100%, 0 100%)",
          background:
            "radial-gradient(circle at 50% 66.6%, rgba(255,255,255,.95), rgba(255,255,255,.5) 28px, rgba(255,255,255,0) 76px), conic-gradient(from 0deg at 50% 66.6%, #f00, #ff0, #0f0, #0ff, #00f, #f0f, #f00)",
        }}
      />
      <svg className="absolute inset-0 overflow-visible" width="375" height="291" fontFamily="Roboto, sans-serif" fontSize="33" fontWeight="500" fill="#111">
        <text x="154" y="30.500" textLength="88" lengthAdjust="spacingAndGlyphs">In Situ</text>
        <text x="38" y="273.500" textLength="120" lengthAdjust="spacingAndGlyphs">Satellite</text>
        <text x="269" y="273.500" textLength="96" lengthAdjust="spacingAndGlyphs">Citizen</text>
      </svg>
    </div>
  );
}

/* ---------- right column ---------- */

function Checkbox() {
  return (
    <svg width="36" height="38" viewBox="0 0 36 38">
      <rect x="1.500" y="4.500" width="30" height="31" rx="3" fill="#f4f4f4" stroke="#b9b9b9" strokeWidth="2.500" />
      <path d="M4 19L12 27L33 2" fill="none" stroke="#6b6b6b" strokeWidth="5" />
    </svg>
  );
}

function ResultRow({ i }: { i: number }) {
  return (
    <div className="flex h-[82.5px]">
      <div className="w-[265px] pt-[7px] text-[42.7px] leading-[48px]">Process_{i}:</div>
      <div className="w-[269px] pt-[12px]"><Checkbox /></div>
      <div className="flex h-[77px] w-[422px] justify-between border-[2.5px] border-[#c8c8c8] border-b-[#d6d6d6] pl-[16px] pr-[17px] text-[32.4px]">
        <span className="pt-[10px] leading-[38px]">GeoJSON</span>
        <span className="pt-[31px]"><Caret dir="d" color="#999" /></span>
      </div>
      <div className="ml-[36px] pt-[4px]"><DownloadIcon /></div>
    </div>
  );
}

function RightPanel() {
  return (
    <section className="ml-[8px] flex w-[1177px] shrink-0 bg-[#3892d5]">
      <div className="flex w-[20px] shrink-0 flex-col pt-[878px]">
        <div className="flex h-[120px] items-center justify-center border-2 border-[#8bc0e8] bg-[#5ea6dc]">
          <Caret dir="r" color="#2d86cc" />
        </div>
      </div>
      <div className="flex w-[1150px] flex-col border-x-[2.5px] border-b-[3px] border-[#187fca] bg-white">
        <div className="flex h-[90px] shrink-0 items-center justify-between bg-[#187fca] pl-[22px] pr-[22px] text-[32.4px] font-bold text-white">
          Result
          <svg width="40" height="40" viewBox="0 0 40 40">
            <circle cx="20" cy="20" r="20" fill="#8bbfe7" />
            <path d="M15 9L26 20L15 31" fill="none" stroke="#187fca" strokeWidth="6.500" />
          </svg>
        </div>
        <div className="relative h-[1070px] w-[1145px] shrink-0 overflow-hidden">
          <CityMap />
          <TriangleLegend />
          <div className="absolute left-[16px] top-[16px] flex flex-col gap-[2px] rounded-[10px] bg-white/40 p-[8px]">
            <div className="flex h-[51px] w-[51px] items-center justify-center rounded-t-[6px] bg-[#7390bd]">
              <svg width="20" height="20"><path d="M10 0V20M0 10H20" stroke="#fff" strokeWidth="4.500" /></svg>
            </div>
            <div className="flex h-[51px] w-[51px] items-center justify-center rounded-b-[6px] bg-[#7390bd]">
              <svg width="20" height="20"><path d="M0 10H20" stroke="#fff" strokeWidth="4.500" /></svg>
            </div>
          </div>
          <div className="absolute bottom-[16px] right-[16px] rounded-[10px] bg-white/40 p-[8px]">
            <div className="flex h-[51px] w-[51px] items-center justify-center rounded-[6px] bg-[#5375b0] font-['DejaVu_Sans'] text-[41px] font-bold leading-none text-white">i</div>
          </div>
        </div>
        <div className="flex h-[50px] shrink-0 items-end bg-[#187fca] pl-[33px] text-[32.4px] font-bold leading-[38px]">
          <div className="h-[47px] w-[214px] rounded-t-[8px] bg-[#4b9cd9] pt-[11px] text-center text-white">Data Layers</div>
          <div className="ml-[2px] h-[47px] w-[292px] rounded-t-[8px] bg-[#aed2ed] pt-[11px] text-center text-[#187fca]">Execution Result</div>
          <div className="ml-[5px] h-[47px] w-[291px] rounded-t-[8px] bg-[#4b9cd9] pt-[11px] text-center text-white">SOS Time-Series</div>
        </div>
        <div className="h-[13px] shrink-0 bg-[#aed2ed]" />
        <div className="pl-[24px] pt-[25px]">
          <ResultRow i={0} />
          <ResultRow i={1} />
          <ResultRow i={2} />
          <div className="flex">
            <div className="w-[265px] pt-[7px] text-[42.7px] leading-[48px] text-[#b5b5b5]">Process_3:</div>
            <div className="w-[269px] pt-[12px] opacity-40"><Checkbox /></div>
            <div className="h-[59px] w-[422px] border-2 border-[#d0d0d0] border-t-[#c0c0c0] pl-[15px] pt-[9px] text-[32.4px] leading-[38px]">
              33139.619450018625
            </div>
          </div>
        </div>
      </div>
    </section>
  );
}

export default function App() {
  return (
    <div className="flex h-[1887px] w-[3840px] flex-col overflow-hidden bg-[#fafbfb] font-['Liberation_Sans',Arial,sans-serif] text-black">
      <div className="h-[3px] shrink-0 border-b border-[#a3a6a6] bg-[#e8e9e8]" />
      <div className="mt-[5px] flex h-[1873px] shrink-0 pl-[5px]">
        <LeftPanel />
        <CenterPanel />
        <RightPanel />
      </div>
      <div className="h-[5px] shrink-0 bg-[#eeeff0]" />
      <div className="h-px shrink-0 bg-[#1a1a1a]" />
    </div>
  );
}
